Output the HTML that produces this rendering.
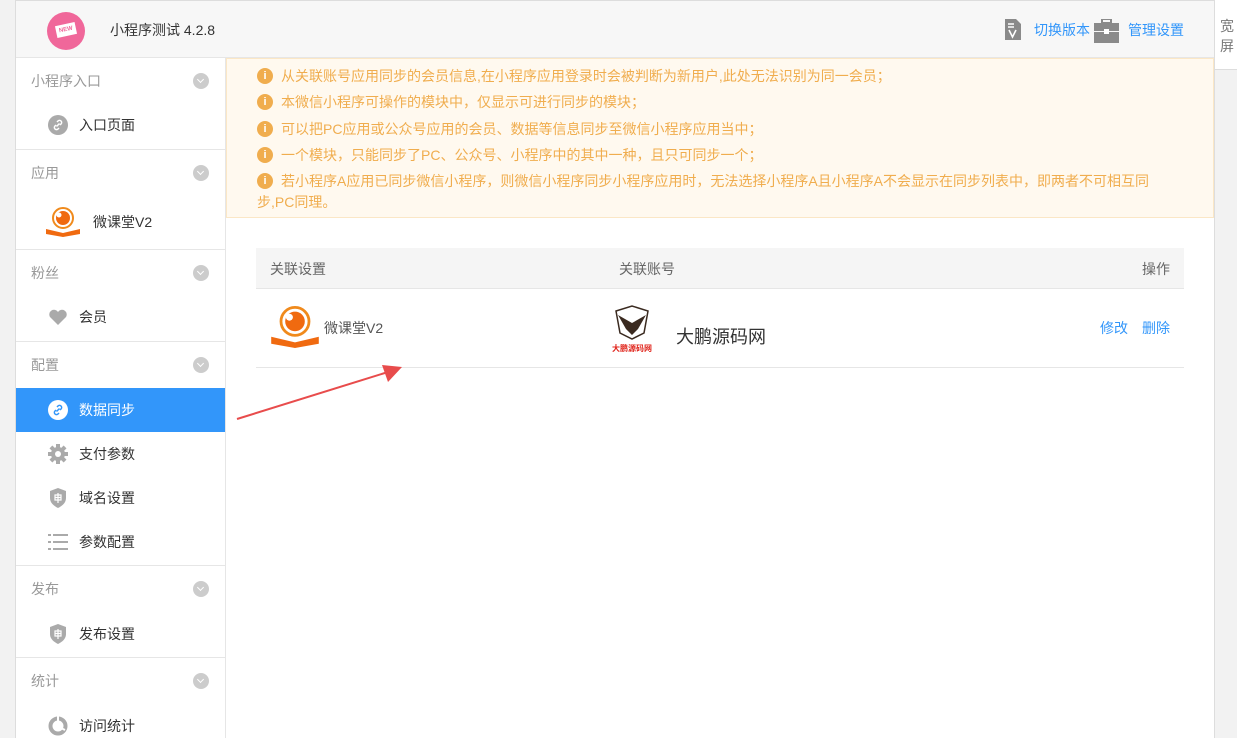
<!DOCTYPE html>
<html><head><meta charset="utf-8"><style>
*{margin:0;padding:0;box-sizing:border-box}
body{width:1237px;height:738px;overflow:hidden;background:#fff;font-family:"Liberation Sans","Noto Sans CJK SC",sans-serif;font-size:14px;color:#333;position:relative}
.abs{position:absolute}
.strip{left:0;top:0;width:16px;height:738px;background:#f2f2f2;border-right:1px solid #ddd}
.hdr{left:16px;top:0;width:1198px;height:58px;background:#f7f7f7;border-bottom:1px solid #e6e6e6;border-top:1px solid #ddd}
.side{left:16px;top:58px;width:210px;height:680px;background:#fff;border-right:1px solid #e6e6e6}
.g{position:absolute;left:0;width:209px;height:46px;color:#999;font-size:14px;padding:13px 0 0 15px}
.g i{position:absolute;right:16px;top:15px;width:16px;height:16px;border-radius:50%;background:#ccc}
.g i:after{content:"";position:absolute;left:5px;top:4px;width:4px;height:4px;border-right:1px solid #fff;border-bottom:1px solid #fff;transform:rotate(45deg)}
.it{position:absolute;left:0;width:209px;height:44px;padding:12px 0 0 63px;color:#333}
.it .ic{position:absolute;left:32px;top:12px;width:20px;height:20px}
.dv{position:absolute;left:0;width:209px;height:1px;background:#e6e6e6}
.note{left:226px;top:58px;width:988px;height:160px;background:#fff9ef;border:1px solid #fbe7c6}
.note p{position:absolute;left:32px;color:#f0ad4e;font-size:14px;white-space:nowrap}
.note p b{position:absolute;left:-2px;top:2px;width:16px;height:16px;border-radius:50%;background:#f0ad4e;color:#fff;font-size:11px;text-align:center;line-height:16px;font-weight:bold}
.note p span{padding-left:22px}
.right{left:1214px;top:0;width:23px;height:738px;background:#f2f2f2;border-left:1px solid #ddd}
</style></head><body>
<div class="abs strip"></div>
<div class="abs hdr">
 <div class="abs" style="left:31px;top:11px;width:38px;height:38px;border-radius:50%;background:#f0679a"></div>
 <div class="abs" style="left:40px;top:23px;width:20px;height:12px;background:#fff;transform:rotate(-12deg);color:#f0679a;font-size:6px;font-weight:bold;text-align:center;line-height:12px">NEW</div>
 <div class="abs" style="left:94px;top:19px;font-size:14px;color:#333">小程序测试 4.2.8</div>
 <svg class="abs" style="left:988px;top:18px" width="17" height="22" viewBox="0 0 17 22"><path d="M1 0h11l5 5v16H1z" fill="#8a8a8a"/><path d="M4 5h6M4 8h6M5 11l3.5 7 3.5-7" stroke="#fff" stroke-width="1.6" fill="none"/></svg>
 <div class="abs" style="left:1018px;top:19px;color:#3296fa">切换版本</div>
 <svg class="abs" style="left:1078px;top:18px" width="25" height="24" viewBox="0 0 25 24"><rect x="8" y="0" width="9" height="4" fill="none" stroke="#8a8a8a" stroke-width="2"/><rect x="0" y="4" width="25" height="8" fill="#8a8a8a"/><rect x="0" y="13" width="25" height="11" fill="#8a8a8a"/><rect x="10" y="10" width="5" height="5" fill="#fff"/></svg>
 <div class="abs" style="left:1112px;top:19px;color:#3296fa">管理设置</div>
</div>
<div class="abs right"><div style="background:#fff;height:70px;border-bottom:1px solid #ddd;padding:16px 0 0 5px;color:#777;font-size:14px;line-height:20px">宽<br>屏</div></div>
<div class="abs side">
 <div class="g" style="top:0">小程序入口<i></i></div>
 <div class="it" style="top:45px"><svg class="ic" viewBox="0 0 20 20"><circle cx="10" cy="10" r="10" fill="#aaa"/><path d="M8.5 11.5l3-3M9 7l1-1a2 2 0 013 3l-1 1M11 13l-1 1a2 2 0 01-3-3l1-1" stroke="#fff" stroke-width="1.5" fill="none"/></svg>入口页面</div>
 <div class="dv" style="top:91px"></div>
 <div class="g" style="top:92px">应用<i></i></div>
 <div class="it" style="top:143px;padding-left:77px;padding-top:11px"><svg class="ic" style="left:30px;top:6px;width:34px;height:30px" viewBox="0 0 34 30"><circle cx="17" cy="11" r="10" fill="none" stroke="#f08a1c" stroke-width="2"/><circle cx="17" cy="11" r="7" fill="#f06a10"/><circle cx="13" cy="8" r="2.5" fill="#fff"/><path d="M0 22l17 4 17-4v5l-17 3-17-3z" fill="#f06a10"/></svg>微课堂V2</div>
 <div class="dv" style="top:191px"></div>
 <div class="g" style="top:192px">粉丝<i></i></div>
 <div class="it" style="top:237px"><svg class="ic" viewBox="0 0 20 20"><path d="M10 18L2 10a4.5 4.5 0 018-5 4.5 4.5 0 018 5z" fill="#aaa"/></svg>会员</div>
 <div class="dv" style="top:283px"></div>
 <div class="g" style="top:284px">配置<i></i></div>
 <div class="it" style="top:330px;background:#3296fa;color:#fff"><svg class="ic" viewBox="0 0 20 20"><circle cx="10" cy="10" r="10" fill="#fff"/><path d="M8.5 11.5l3-3M9 7l1-1a2 2 0 013 3l-1 1M11 13l-1 1a2 2 0 01-3-3l1-1" stroke="#3296fa" stroke-width="1.5" fill="none"/></svg>数据同步</div>
 <div class="it" style="top:374px"><svg class="ic" viewBox="0 0 20 20"><circle cx="10" cy="10" r="7" fill="#aaa"/><g fill="#aaa"><rect x="8" y="0" width="4" height="20"/><rect x="0" y="8" width="20" height="4"/><rect x="8" y="0" width="4" height="20" transform="rotate(45 10 10)"/><rect x="8" y="0" width="4" height="20" transform="rotate(-45 10 10)"/></g><circle cx="10" cy="10" r="3" fill="#fff"/></svg>支付参数</div>
 <div class="it" style="top:418px"><svg class="ic" viewBox="0 0 20 20"><path d="M10 0l8 3v7c0 5-4 8-8 10-4-2-8-5-8-10V3z" fill="#aaa"/><path d="M7 7h6v5H7zM10 5v10M7 9.5h6" stroke="#fff" stroke-width="1.2" fill="none"/></svg>域名设置</div>
 <div class="it" style="top:462px"><svg class="ic" viewBox="0 0 20 20"><g fill="#aaa"><rect x="0" y="2" width="3" height="2"/><rect x="5" y="2" width="15" height="2"/><rect x="0" y="9" width="3" height="2"/><rect x="5" y="9" width="15" height="2"/><rect x="0" y="16" width="3" height="2"/><rect x="5" y="16" width="15" height="2"/></g></svg>参数配置</div>
 <div class="dv" style="top:507px"></div>
 <div class="g" style="top:508px">发布<i></i></div>
 <div class="it" style="top:554px"><svg class="ic" viewBox="0 0 20 20"><path d="M10 0l8 3v7c0 5-4 8-8 10-4-2-8-5-8-10V3z" fill="#aaa"/><path d="M7 7h6v5H7zM10 5v10M7 9.5h6" stroke="#fff" stroke-width="1.2" fill="none"/></svg>发布设置</div>
 <div class="dv" style="top:599px"></div>
 <div class="g" style="top:600px">统计<i></i></div>
 <div class="it" style="top:646px"><svg class="ic" viewBox="0 0 20 20"><circle cx="10" cy="10" r="7.5" fill="none" stroke="#aaa" stroke-width="4"/><path d="M10 0v5M17 14l-4-2" stroke="#fff" stroke-width="2"/></svg>访问统计</div>
</div>
<div class="abs note">
 <p style="top:7px"><b>i</b><span>从关联账号应用同步的会员信息,在小程序应用登录时会被判断为新用户,此处无法识别为同一会员；</span></p>
 <p style="top:33px"><b>i</b><span>本微信小程序可操作的模块中，仅显示可进行同步的模块；</span></p>
 <p style="top:60px"><b>i</b><span>可以把PC应用或公众号应用的会员、数据等信息同步至微信小程序应用当中；</span></p>
 <p style="top:86px"><b>i</b><span>一个模块，只能同步了PC、公众号、小程序中的其中一种，且只可同步一个；</span></p>
 <p style="top:112px"><b>i</b><span>若小程序A应用已同步微信小程序，则微信小程序同步小程序应用时，无法选择小程序A且小程序A不会显示在同步列表中，即两者不可相互同</span></p>
 <p style="top:133px;left:30px">步,PC同理。</p>
</div>
<div class="abs" style="left:256px;top:248px;width:928px;height:41px;background:#f5f5f5;border-bottom:1px solid #e6e6e6;color:#666">
 <span class="abs" style="left:14px;top:11px">关联设置</span>
 <span class="abs" style="left:363px;top:11px">关联账号</span>
 <span class="abs" style="right:14px;top:11px">操作</span>
</div>
<div class="abs" style="left:256px;top:289px;width:928px;height:79px;border-bottom:1px solid #e6e6e6">
 <svg class="abs" style="left:13px;top:17px" width="52" height="42" viewBox="0 0 34 30"><circle cx="17" cy="11" r="10" fill="none" stroke="#f08a1c" stroke-width="2"/><circle cx="17" cy="11" r="7" fill="#f06a10"/><circle cx="13" cy="8" r="2.5" fill="#fff"/><path d="M0 22l17 4 17-4v5l-17 3-17-3z" fill="#f06a10"/></svg>
 <span class="abs" style="left:68px;top:29px;color:#555">微课堂V2</span>
 <svg class="abs" style="left:356px;top:16px" width="40" height="52" viewBox="0 0 40 52"><path d="M4 6l16-5 16 5-4 22-12 6-12-6z" fill="none" stroke="#3a2a20" stroke-width="1.5"/><path d="M6 10l14 8 14-8-8 14-6 6-6-6z" fill="#3a2a20"/><text x="20" y="46" font-size="8" text-anchor="middle" fill="#e0231a" font-weight="bold">大鹏源码网</text></svg>
 <span class="abs" style="left:420px;top:34px;font-size:18px;color:#333">大鹏源码网</span>
 <span class="abs" style="right:56px;top:29px;color:#3296fa">修改</span>
 <span class="abs" style="right:14px;top:29px;color:#3296fa">删除</span>
</div>
<svg class="abs" style="left:230px;top:360px" width="180" height="65"><line x1="7" y1="59" x2="158" y2="12" stroke="#e84c4c" stroke-width="2"/><path d="M172 7l-20 -2 6 17z" fill="#e84c4c"/></svg>
</body></html>
